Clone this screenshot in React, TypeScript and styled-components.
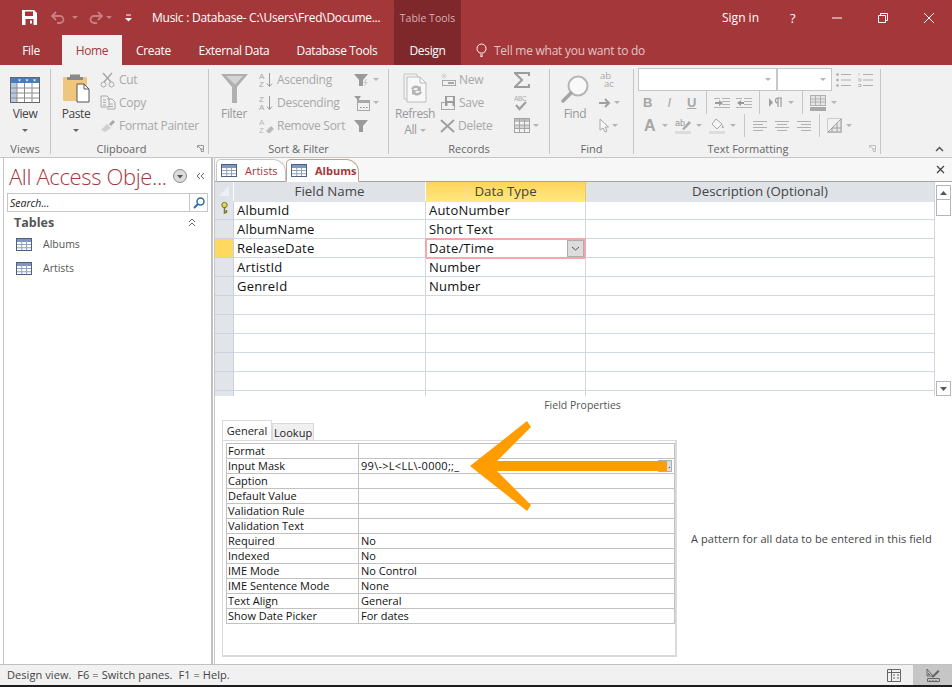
import React from "react";
import styled, { createGlobalStyle } from "styled-components";

const RED = "#a4373a";
const DIM = "#a8a8a8";
const FONT = `"Open Sans", "Noto Sans", "Liberation Sans", sans-serif`;

const GlobalStyle = createGlobalStyle`
  html, body { margin: 0; padding: 0; background: #fff; }
  body { font-family: ${FONT}; }
  * { box-sizing: border-box; }
`;

const Window = styled.div`
  width: 952px;
  height: 687px;
  overflow: hidden;
  display: flex;
  flex-direction: column;
  position: relative;
  background: #fff;
`;

/* title bar */
const TitleBar = styled.div`
  height: 35px;
  flex: none;
  display: flex;
  align-items: center;
  background: ${RED};
  color: #fff;
`;
const QuickSlot = styled.div<{ $ml: number }>`
  margin-left: ${(p) => p.$ml}px;
  display: flex;
  align-items: center;
`;
const DocTitle = styled.div`
  width: 242px;
  margin-left: 20px;
  font-size: 12px;
  white-space: nowrap;
  letter-spacing: -0.26px;
`;
const ContextLabel = styled.div`
  width: 67px;
  height: 100%;
  background: #7f282b;
  color: #d6aeb0;
  font-size: 10.5px;
  display: flex;
  align-items: center;
  justify-content: center;
`;
const SignIn = styled.div`
  margin-left: 261px;
  width: 36px;
  font-size: 12px;
  white-space: nowrap;
`;
const Help = styled.div`
  margin-left: 32px;
  width: 10px;
  font-size: 13px;
`;
const WindowButton = styled.div<{ $ml: number }>`
  margin-left: ${(p) => p.$ml}px;
  display: flex;
`;

/* ribbon tabs */
const TabStrip = styled.div`
  height: 30px;
  flex: none;
  display: flex;
  background: ${RED};
`;
const RibbonTab = styled.div<{ $w: number; $active?: boolean; $context?: boolean }>`
  width: ${(p) => p.$w}px;
  display: flex;
  align-items: center;
  justify-content: center;
  font-size: 12px;
  letter-spacing: -0.35px;
  color: ${(p) => (p.$active ? RED : "#fff")};
  background: ${(p) => (p.$active ? "#f1f1f1" : p.$context ? "#7f282b" : "transparent")};
  margin-left: ${(p) => (p.$context ? 3 : 0)}px;
`;
const TellMe = styled.div`
  margin-left: 15px;
  display: flex;
  align-items: center;
  gap: 7px;
  font-size: 12px;
  letter-spacing: -0.25px;
  color: #e3c3c4;
`;

/* ribbon */
const Ribbon = styled.div`
  height: 93px;
  flex: none;
  display: flex;
  background: #f1f1f1;
  border-bottom: 1px solid #c6c6c6;
  position: relative;
`;
const Group = styled.div<{ $w: number }>`
  width: ${(p) => p.$w}px;
  flex: none;
  display: flex;
  flex-direction: column;
  position: relative;
`;
const GroupBody = styled.div<{ $pl?: number }>`
  height: 75px;
  padding: 3px 0 0 ${(p) => p.$pl ?? 0}px;
  display: flex;
`;
const GroupLabel = styled.div<{ $pr?: number }>`
  height: 17px;
  padding-right: ${(p) => p.$pr ?? 0}px;
  font-size: 11px;
  line-height: 17px;
  text-align: center;
  color: #666;
`;
const GroupSep = styled.div`
  width: 1px;
  flex: none;
  background: #c6c6c6;
  margin: 4px 0 3px;
`;
const Launcher = styled.div`
  position: absolute;
  right: 4px;
  bottom: 5px;
  display: flex;
`;
const Large = styled.div<{ $w: number; $ml?: number; $dark?: boolean }>`
  width: ${(p) => p.$w}px;
  margin-left: ${(p) => p.$ml ?? 0}px;
  padding-top: 5px;
  display: flex;
  flex-direction: column;
  align-items: center;
  flex: none;
  font-size: 12px;
  letter-spacing: -0.4px;
  line-height: 16px;
  color: ${(p) => (p.$dark ? "#444" : "#999")};
`;
const LargeIcon = styled.div`
  height: 30px;
  margin-bottom: 3px;
  display: flex;
  align-items: flex-end;
`;
const Caret = styled.div`
  height: 14px;
  line-height: 14px;
  display: flex;
  align-items: center;
  justify-content: center;
  gap: 3px;
  margin-top: 1px;
`;
const SmallColumn = styled.div<{ $ml: number; $w?: number }>`
  margin-left: ${(p) => p.$ml}px;
  ${(p) => (p.$w ? `width: ${p.$w}px;` : "")}
  display: flex;
  flex-direction: column;
  flex: none;
`;
const Small = styled.div`
  height: 23px;
  display: flex;
  align-items: center;
  gap: 3px;
  font-size: 12px;
  letter-spacing: -0.28px;
  color: ${DIM};
  white-space: nowrap;
`;
const FormatColumn = styled.div`
  display: flex;
  flex-direction: column;
`;
const ToolRow = styled.div<{ $h: number }>`
  height: ${(p) => p.$h}px;
  display: flex;
  align-items: center;
`;
const Slot = styled.div<{ $ml: number }>`
  margin-left: ${(p) => p.$ml}px;
  display: flex;
  align-items: center;
  justify-content: center;
  flex: none;
`;
const ToolDivider = styled.div<{ $ml: number }>`
  margin-left: ${(p) => p.$ml}px;
  width: 1px;
  height: 100%;
  background: #c6c6c6;
  flex: none;
`;
const Combo = styled.div<{ $w: number }>`
  width: ${(p) => p.$w}px;
  height: 23px;
  background: #fff;
  border: 1px solid #c6c6c6;
  display: flex;
  align-items: center;
  justify-content: flex-end;
  padding-right: 5px;
  flex: none;
`;
const CollapseRibbon = styled.div`
  position: absolute;
  right: 8px;
  bottom: 5px;
  display: flex;
`;

/* body */
const Main = styled.div`
  flex: 1;
  min-height: 0;
  display: flex;
`;
const NavPane = styled.div`
  width: 210px;
  flex: none;
  margin-left: 3px;
  padding: 0 0 0 3px;
  border-left: 1px solid #c6c6c6;
  border-right: 2px solid #c0c0c0;
  margin-right: 0;
  display: flex;
  flex-direction: column;
`;
const NavHeader = styled.div`
  height: 35px;
  display: flex;
  align-items: center;
`;
const NavTitle = styled.div`
  width: 166px;
  padding-left: 2px;
  color: ${RED};
  font-size: 22px;
  font-weight: 300;
  letter-spacing: -0.35px;
  white-space: nowrap;
`;
const NavTools = styled.div`
  display: flex;
  align-items: center;
  gap: 9px;
`;
const SearchBox = styled.div`
  width: 201px;
  height: 19px;
  border: 1px solid #c6c6c6;
  display: flex;
  align-items: center;
  justify-content: space-between;
  font-size: 10.5px;
  font-style: italic;
  color: #222;
  padding-left: 2px;
`;
const SearchButton = styled.div`
  width: 18px;
  height: 17px;
  border-left: 1px solid #c6c6c6;
  display: flex;
  align-items: center;
  justify-content: center;
`;
const NavSection = styled.div`
  height: 20px;
  display: flex;
  align-items: center;
  justify-content: space-between;
  padding: 0 15px 0 7px;
  font-size: 12.5px;
  font-weight: 700;
  color: #555;
`;
const NavItem = styled.div`
  height: 24px;
  display: flex;
  align-items: center;
  gap: 11px;
  padding-left: 9px;
  font-size: 10.5px;
  color: #555;
`;
const Workspace = styled.div`
  flex: 1;
  min-width: 0;
  margin-left: 1px;
  display: flex;
  flex-direction: column;
  border-left: 1px solid #c6c6c6;
`;
const DocTabs = styled.div`
  height: 24px;
  flex: none;
  display: flex;
  align-items: flex-end;
  padding-left: 1px;
  background: #f7f7f7;
  border-bottom: 1px solid #a5a5a5;
  position: relative;
  padding-top: 1px;
`;
const DocTab = styled.div<{ $active?: boolean; $w: number }>`
  width: ${(p) => p.$w}px;
  height: 23px;
  margin-bottom: -1px;
  padding-left: 4px;
  display: flex;
  align-items: center;
  gap: 8px;
  background: #fff;
  border: 1px solid ${(p) => (p.$active ? "#b8a58e" : "#c6c6c6")};
  border-bottom: ${(p) => (p.$active ? "1px solid #fff" : "1px solid #a5a5a5")};
  border-radius: 5px 13px 0 0;
  font-size: 11px;
  font-weight: ${(p) => (p.$active ? 700 : 400)};
  color: ${RED};
`;
const CloseDoc = styled.div`
  position: absolute;
  right: 7px;
  top: 7px;
  display: flex;
`;

/* design grid */
const GridArea = styled.div`
  height: 214px;
  flex: none;
  display: flex;
`;
const Grid = styled.div`
  flex: 1;
  min-width: 0;
  overflow: hidden;
`;
const GridRow = styled.div`
  height: 19px;
  display: grid;
  grid-template-columns: 19px 192px 160px 349px;
`;
const HeaderCell = styled.div<{ $selected?: boolean }>`
  display: flex;
  align-items: center;
  justify-content: center;
  padding-bottom: 2px;
  font-size: 13.3px;
  color: #444;
  background: ${(p) => (p.$selected ? "linear-gradient(#ffd45e, #ffe97f)" : "#dfe3e8")};
  border-right: 1px solid ${(p) => (p.$selected ? "#e8c860" : "#fff")};
`;
const Selector = styled.div<{ $current?: boolean }>`
  background: ${(p) => (p.$current ? "#ffd95f" : "#e1e4e9")};
  border-bottom: 1px solid #c8d2e2;
  border-right: 1px solid #c8d2e2;
  display: flex;
  justify-content: center;
  padding-top: 1px;
`;
const Cell = styled.div<{ $active?: boolean }>`
  border-right: 1px solid #d0d7e5;
  border-bottom: 1px solid #d0d7e5;
  padding-left: 3px;
  font-size: 13px;
  line-height: 18px;
  color: #111;
  white-space: nowrap;
  position: relative;
  letter-spacing: 0.2px;
`;
const ActiveFrame = styled.div`
  position: absolute;
  left: -1px;
  right: -1px;
  top: -1px;
  bottom: -2px;
  border: 2px solid #f4a7ad;
  display: flex;
  justify-content: flex-end;
  align-items: center;
  padding-right: 0;
`;
const ComboButton = styled.div`
  width: 17px;
  height: 17px;
  background: #dcdcdc;
  border: 1px solid #adadad;
  display: flex;
  align-items: center;
  justify-content: center;
`;
const ScrollBar = styled.div`
  width: 18px;
  flex: none;
  display: flex;
  flex-direction: column;
  justify-content: space-between;
  background: #fff;
  border-left: 1px solid #d0d7e5;
  padding: 3px 0 0 1px;
`;
const ScrollTop = styled.div`
  display: flex;
  flex-direction: column;
`;
const ScrollButton = styled.div`
  width: 15px;
  height: 15px;
  border: 1px solid #b5b5b5;
  background: #fff;
  display: flex;
  align-items: center;
  justify-content: center;
`;
const ScrollThumb = styled.div`
  width: 15px;
  height: 17px;
  border: 1px solid #b5b5b5;
  margin-top: -1px;
  background: #fff;
`;

/* field properties */
const PropsArea = styled.div`
  flex: 1;
  min-height: 0;
  display: flex;
  flex-direction: column;
  position: relative;
`;
const PropsCaption = styled.div`
  height: 19px;
  flex: none;
  text-align: center;
  font-size: 10.5px;
  line-height: 19px;
  color: #555;
  padding-right: 2px;
`;
const PropsBody = styled.div`
  flex: 1;
  display: flex;
  padding: 5px 0 0 7px;
`;
const PropsLeft = styled.div`
  width: 455px;
  flex: none;
  display: flex;
  flex-direction: column;
`;
const PropTabs = styled.div`
  height: 20px;
  display: flex;
  align-items: flex-end;
  flex: none;
`;
const PropTab = styled.div<{ $active?: boolean; $w: number }>`
  width: ${(p) => p.$w}px;
  height: ${(p) => (p.$active ? 20 : 17)}px;
  display: flex;
  align-items: center;
  justify-content: center;
  font-size: 11px;
  color: #222;
  background: ${(p) => (p.$active ? "#fff" : "#f0f0f0")};
  border: 1px solid #dadada;
  border-bottom: 0;
`;
const PropsPanel = styled.div`
  height: 217px;
  border: 1px solid #dadada;
  border-right-width: 2px;
  border-bottom-width: 2px;
  padding: 2px 0 0 3px;
`;
const PropsTable = styled.div`
  width: 449px;
  border: 1px solid #c2c2c2;
  border-bottom: 0;
`;
const PropRow = styled.div`
  height: 15px;
  display: grid;
  grid-template-columns: 132px 1fr;
  border-bottom: 1px solid #c2c2c2;
`;
const PropName = styled.div`
  padding-left: 1px;
  border-right: 1px solid #c2c2c2;
  font-size: 11px;
  line-height: 14px;
  color: #111;
  white-space: nowrap;
`;
const PropValue = styled.div<{ $mask?: boolean }>`
  padding-left: 2px;
  font-size: 11px;
  letter-spacing: ${(p) => (p.$mask ? 0.28 : 0)}px;
  line-height: 14px;
  color: #111;
  white-space: nowrap;
  position: relative;
`;
const BuildButton = styled.div`
  position: absolute;
  right: 2px;
  top: 1px;
  width: 14px;
  height: 12px;
  background: #dcdcdc;
  border: 1px solid #b0b0b0;
  font-size: 9px;
  line-height: 8px;
  text-align: right;
  color: #111;
`;
const HelpText = styled.div`
  margin-left: 14px;
  padding-top: 112px;
  font-size: 11px;
  letter-spacing: 0.07px;
  line-height: 14px;
  color: #444;
  white-space: nowrap;
`;
const ArrowMark = styled.svg`
  position: absolute;
  left: 255px;
  top: 25px;
`;

/* status */
const StatusBar = styled.div`
  height: 21px;
  flex: none;
  display: flex;
  align-items: center;
  justify-content: space-between;
  padding-left: 7px;
  background: #f1f1f1;
  border-top: 1px solid #c0c0c0;
  font-size: 11px;
  line-height: 17px;
  letter-spacing: 0.07px;
  color: #444;
  white-space: pre;
`;
const StatusText = styled.div`
  margin-top: -2px;
`;
const ViewButtons = styled.div`
  height: 100%;
  display: flex;
  align-items: center;
`;
const ViewButton = styled.div<{ $active?: boolean; $w: number }>`
  width: ${(p) => p.$w}px;
  height: 100%;
  display: flex;
  align-items: center;
  justify-content: center;
  background: ${(p) => (p.$active ? "#c6c6c6" : "transparent")};
`;
const BottomEdge = styled.div`
  height: 2px;
  flex: none;
  background: #1d1d1d;
`;

/* drawings */
const Svg = styled.svg`
  display: block;
  flex: none;
`;

const Icon: React.FC<{ w: number; h: number; children: React.ReactNode }> = ({ w, h, children }) => (
  <Svg width={w} height={h} viewBox={`0 0 ${w} ${h}`} fill="none">
    {children}
  </Svg>
);

const DownCaret = ({ c = "#b5b5b5" }: { c?: string }) => (
  <Icon w={6} h={3}>
    <path d="M0 0h6L3 3z" fill={c} />
  </Icon>
);

const TableIcon = ({ w = 16, h = 13 }: { w?: number; h?: number }) => (
  <Icon w={w} h={h}>
    <rect x=".5" y=".5" width={w - 1} height={h - 1} fill="#fff" stroke="#4d6082" />
    <rect x="1" y="1" width={w - 2} height="3" fill="#7f97bd" />
    <path
      d={`M1 ${h * 0.5}H${w - 1}M1 ${h * 0.75}H${w - 1}M${w * 0.36} 4V${h - 1}M${w * 0.66} 4V${h - 1}`}
      stroke="#8ea0bd"
    />
  </Icon>
);

const ViewIcon = () => (
  <Icon w={30} h={26}>
    <rect x=".5" y=".5" width="29" height="25" fill="#fff" stroke="#666" />
    <rect x="1" y="1" width="28" height="5" fill="#4a7ebb" />
    <rect x="1" y="6" width="6" height="19" fill="#b4c9e0" />
    <path d="M1 11h28M1 16h28M1 21h28M7 6v19M14.5 6v19M22 6v19" stroke="#8c8c8c" />
    <path d="M8 2.5h3l-1.500 2zM15.500 2.500h3l-1.500 2zM23 2.500h3l-1.500 2z" fill="#fff" />
  </Icon>
);

const PasteIcon = () => (
  <Icon w={30} h={30}>
    <rect x="2" y="4" width="24" height="24" rx="1" fill="#eec77c" />
    <path d="M9 4V1.500h10V4h3v3H6V4z" fill="#8a8a8a" />
    <path d="M16 11h7l5 5v13H16z" fill="#fff" stroke="#555" />
    <path d="M23 11v5h5" stroke="#555" />
  </Icon>
);

const CutIcon = () => (
  <Icon w={16} h={16}>
    <path d="M3 1l8 9M12 1L4 10" stroke={DIM} strokeWidth="1.500" />
    <circle cx="3.500" cy="12.500" r="2.500" stroke={DIM} />
    <circle cx="11.500" cy="12.500" r="2.500" stroke={DIM} />
  </Icon>
);
const CopyIcon = () => (
  <Icon w={16} h={15}>
    <path d="M1 1h6l2 2v9H1zM7 4h5l3 3v7H7" fill="#f1f1f1" stroke={DIM} />
    <path d="M3 5h3M3 7.500h3M3 10h3M9 9h4M9 11.500h4" stroke={DIM} />
  </Icon>
);
const PainterIcon = () => (
  <Icon w={16} h={15}>
    <path d="M1 12l6-6 4 4-6 4z" fill="#d0d0d0" />
    <path d="M9 6l4-4 2 2-4 4z" fill={DIM} />
  </Icon>
);

const FilterIcon = () => (
  <Icon w={27} h={29}>
    <path d="M0 0h27L16 13v16h-5V13z" fill="#b0b0b0" />
    <path d="M5 2h17l-8 8.500z" fill="#d4d4d4" />
  </Icon>
);

const SortIcon = ({ top, bottom }: { top: string; bottom: string }) => (
  <Icon w={15} h={16}>
    <text x="0" y="7" fontSize="8" fontFamily="Liberation Sans" fill={DIM}>{top}</text>
    <text x="0" y="15" fontSize="8" fontFamily="Liberation Sans" fill={DIM}>{bottom}</text>
    <path d="M10.500 1v13M8 11.500l2.500 3 2.500-3" stroke="#999" />
  </Icon>
);
const RemoveSortIcon = () => (
  <Icon w={15} h={16}>
    <text x="0" y="7" fontSize="8" fontFamily="Liberation Sans" fill="#bbb">A</text>
    <text x="0" y="15" fontSize="8" fontFamily="Liberation Sans" fill="#bbb">Z</text>
    <path d="M7 13l5-5 3 3-4 4H9z" fill="#bbb" />
  </Icon>
);
const SmallFunnel = ({ bolt, table }: { bolt?: boolean; table?: boolean }) => (
  <Icon w={16} h={16}>
    <path d={table ? "M0 1h7L5 4v3H3V4z" : "M0 2h14L9 8v6H5V8z"} fill="#9a9a9a" />
    {bolt && <path d="M12 7l-3 4h2l-1 4 4-5h-2l1-3z" fill="#d0d0d0" />}
    {table && (
      <>
        <rect x="3.500" y="5.500" width="12" height="10" fill="#f1f1f1" stroke={DIM} />
        <path d="M4 6h11v2H4z" fill={DIM} />
        <path d="M6 12.500h1.500M9 12.500h1.500M12 12.500h1.500" stroke="#888" />
      </>
    )}
  </Icon>
);

const RefreshIcon = () => (
  <Icon w={24} h={30}>
    <path d="M1 1h13v3" stroke="#c4c4c4" />
    <path d="M1 1v25h3" stroke="#c4c4c4" />
    <path d="M4 4h13l6 6v19H4z" fill="#f8f8f8" stroke="#bdbdbd" />
    <path d="M17 4v6h6" stroke="#bdbdbd" />
    <path d="M8 16a5.500 5.500 0 0 1 9-2l1-1v5h-5l2-2a3 3 0 0 0-5 1zM19 19a5.500 5.500 0 0 1-9 2l-1 1v-5h5l-2 2a3 3 0 0 0 5-1z" fill="#b5b5b5" />
  </Icon>
);
const NewIcon = () => (
  <Icon w={16} h={14}>
    <path d="M4 0v6M1 3h6M2 1l4 4M6 1L2 5" stroke="#d5d5d5" />
    <rect x="2.500" y="7.500" width="13" height="5" fill="#f1f1f1" stroke={DIM} />
    <rect x="8" y="9" width="6" height="2" fill={DIM} />
  </Icon>
);
const SaveIcon = () => (
  <Icon w={16} h={16}>
    <rect x="1.500" y="7.500" width="13" height="7" stroke={DIM} />
    <path d="M5 1h10v10H5z" fill="#9c9c9c" />
    <rect x="7" y="2" width="6" height="4" fill="#f1f1f1" />
    <rect x="7.500" y="8" width="5" height="3" fill="#f1f1f1" />
  </Icon>
);
const DeleteIcon = () => (
  <Icon w={15} h={14}>
    <path d="M1 1l13 12M14 1L1 13" stroke="#a0a0a0" strokeWidth="2" />
  </Icon>
);
const SigmaIcon = () => (
  <Icon w={16} h={16}>
    <path d="M15 4V1H1l7 7-7 7h14v-3" stroke="#9c9c9c" strokeWidth="2" />
  </Icon>
);
const SpellIcon = () => (
  <Icon w={14} h={17}>
    <text x="0" y="6.500" fontSize="6.500" fontFamily="Liberation Sans" fill={DIM}>ABC</text>
    <path d="M2 11l3.500 4L12 8" stroke="#a0a0a0" strokeWidth="2.200" />
  </Icon>
);
const GridToolIcon = () => (
  <Icon w={16} h={15}>
    <rect x=".5" y=".5" width="15" height="14" fill="#f4f4f4" stroke="#a4a4a4" />
    <rect x="1" y="1" width="14" height="3" fill="#bdbdbd" />
    <rect x="1" y="7" width="14" height="3" fill="#d4d4d4" />
    <path d="M1 7h14M1 10.500h14M5.500 1v13M10.500 1v13" stroke="#a4a4a4" />
  </Icon>
);
const FindIcon = () => (
  <Icon w={28} h={28}>
    <circle cx="17" cy="11" r="9.500" fill="#f9f9f9" stroke="#b5b5b5" strokeWidth="2" />
    <path d="M10 18L2 26" stroke="#a4a4a4" strokeWidth="3.500" strokeLinecap="round" />
  </Icon>
);
const ReplaceMark = styled.div`
  width: 17px;
  height: 16px;
  font-size: 9.5px;
  line-height: 8px;
  color: ${DIM};
  letter-spacing: 0;
`;
const ReplaceLine = styled.div<{ $indent?: boolean }>`
  height: 8px;
  padding-left: ${(p) => (p.$indent ? 5 : 1)}px;
`;
const ReplaceIcon = () => (
  <ReplaceMark>
    <ReplaceLine>ab</ReplaceLine>
    <ReplaceLine $indent>ac</ReplaceLine>
  </ReplaceMark>
);
const GoToIcon = () => (
  <Icon w={12} h={10}>
    <path d="M0 5h9M6 1l4 4-4 4" stroke="#a0a0a0" strokeWidth="2" />
  </Icon>
);
const CursorIcon = () => (
  <Icon w={10} h={15}>
    <path d="M1 1v11l3-2 2 4 2-1-2-4h3.500z" fill="#f8f8f8" stroke="#a8a8a8" />
  </Icon>
);
const BulletIcon = ({ numbered }: { numbered?: boolean }) => (
  <Icon w={15} h={16}>
    <path d="M5 2.500h10M5 8h10M5 13.500h10" stroke="#b0b0b0" />
    {numbered ? (
      <>
        <path d="M1 1.500v2M0 7h3v2H0M0 12.500h3v2H0" stroke="#bbb" />
      </>
    ) : (
      <>
        <circle cx="1.500" cy="2.500" r="1.300" fill="#aaa" />
        <circle cx="1.500" cy="8" r="1.300" fill="#aaa" />
        <circle cx="1.500" cy="13.500" r="1.300" fill="#aaa" />
      </>
    )}
  </Icon>
);
const FontMark = styled.span<{ $i?: boolean; $u?: boolean; $s: number }>`
  font-family: "Liberation Sans", sans-serif;
  font-size: ${(p) => p.$s}px;
  font-weight: ${(p) => (p.$i ? 400 : 700)};
  font-style: ${(p) => (p.$i ? "italic" : "normal")};
  text-decoration: ${(p) => (p.$u ? "underline" : "none")};
  color: #a6a6a6;
`;
const IndentIcon = ({ back }: { back?: boolean }) => (
  <Icon w={16} h={12}>
    <path d="M8 1.500h8M8 4.500h8M8 7.500h8M0 10.500h16M0 1.500h6" stroke="#b4b4b4" />
    <path d={back ? "M5 3v2h3v2H5v2L1 6z" : "M1 5h4V3l4 3-4 3V7H1z"} fill="#9a9a9a" />
  </Icon>
);
const ParaIcon = () => (
  <Icon w={13} h={11}>
    <path d="M0 1l4 4.500L0 10z" fill="#a0a0a0" />
    <path d="M8 1h5M9 1v9M12 1v9M9 1a2.500 2.500 0 0 0 0 5" stroke="#9c9c9c" strokeWidth="1.200" />
  </Icon>
);
const GridlineIcon = () => (
  <Icon w={16} h={16}>
    <rect x=".5" y=".5" width="15" height="10" fill="#e4e4e4" stroke="#b0b0b0" />
    <path d="M1 4h14M1 7h14M5.500 1v9M10.500 1v9" stroke="#b0b0b0" />
    <rect y="12" width="16" height="4" fill="#a8a8a8" />
  </Icon>
);
const HighlightIcon = () => (
  <Icon w={16} h={16}>
    <text x="0" y="8" fontSize="9" fontFamily="Liberation Sans" fill="#999">ab</text>
    <path d="M7 11l7-8 2 2-7 7z" fill="#a8a8a8" />
    <rect y="13" width="16" height="3" fill="#dcdcdc" />
  </Icon>
);
const FillIcon = () => (
  <Icon w={16} h={16}>
    <path d="M7 1l6 5-5 5-5-5z" fill="#f6f6f6" stroke="#a8a8a8" />
    <path d="M13 6l2 4h-2z" fill="#a8a8a8" />
    <rect y="13" width="16" height="3" fill="#dcdcdc" />
  </Icon>
);
const AlignIcon = ({ kind }: { kind: "l" | "c" | "r" }) => {
  const d =
    kind === "l"
      ? "M0 1.500h14M0 4.500h10M0 7.500h14M0 10.500h10"
      : kind === "c"
        ? "M0 1.500h14M2 4.500h10M0 7.500h14M2 10.500h10"
        : "M0 1.500h14M4 4.500h10M0 7.500h14M4 10.500h10";
  return (
    <Icon w={14} h={12}>
      <path d={d} stroke="#b0b0b0" />
    </Icon>
  );
};
const AltRowIcon = () => (
  <Icon w={15} h={15}>
    <path d="M.5.500h14v14H.5z" stroke="#aaa" strokeDasharray="1 1" />
    <path d="M14 1L1 14h13z" fill="#e8e8e8" stroke="#a0a0a0" />
    <path d="M5 14v-4M10 14V5M5 10h9" stroke="#a0a0a0" />
  </Icon>
);
const LauncherIcon = ({ c = "#9a9a9a" }: { c?: string }) => (
  <Icon w={7} h={7}>
    <path d="M.5 3V.500H6.500V6.500H4" stroke={c} />
    <path d="M1 1l4 4M3 5h2V3" stroke={c} />
  </Icon>
);

const NAV = ["Albums", "Artists"];
const FIELDS = [
  ["AlbumId", "AutoNumber"],
  ["AlbumName", "Short Text"],
  ["ReleaseDate", "Date/Time"],
  ["ArtistId", "Number"],
  ["GenreId", "Number"],
  ["", ""],
  ["", ""],
  ["", ""],
  ["", ""],
  ["", ""],
  ["", ""],
];
const PROPS = [
  ["Format", ""],
  ["Input Mask", "99\\->L<LL\\-0000;;_"],
  ["Caption", ""],
  ["Default Value", ""],
  ["Validation Rule", ""],
  ["Validation Text", ""],
  ["Required", "No"],
  ["Indexed", "No"],
  ["IME Mode", "No Control"],
  ["IME Sentence Mode", "None"],
  ["Text Align", "General"],
  ["Show Date Picker", "For dates"],
];

const App: React.FC = () => {
  return (
    <Window>
      <GlobalStyle />
      <TitleBar>
        <QuickSlot $ml={22}>
          <Icon w={15} h={15}>
            <path d="M0 0h12l3 3v12H0z" fill="#fff" />
            <rect x="3" y="1.500" width="8" height="4.500" fill={RED} />
            <rect x="3.500" y="9" width="8" height="6" fill={RED} />
            <rect x="8" y="10.500" width="2" height="3" fill="#fff" />
          </Icon>
        </QuickSlot>
        <QuickSlot $ml={14}>
          <Icon w={18} h={13}>
            <path d="M5 1L1 5l4 4M1 5h8a3.500 3.500 0 0 1 0 7H6" stroke="#c87f81" strokeWidth="1.800" />
          </Icon>
        </QuickSlot>
        <QuickSlot $ml={3}>
          <DownCaret c="#c87f81" />
        </QuickSlot>
        <QuickSlot $ml={9}>
          <Icon w={16} h={13}>
            <path d="M11 1l4 4-4 4M15 5H7a3.500 3.500 0 0 0 0 7h3" stroke="#c87f81" strokeWidth="1.800" />
          </Icon>
        </QuickSlot>
        <QuickSlot $ml={3}>
          <DownCaret c="#c87f81" />
        </QuickSlot>
        <QuickSlot $ml={13}>
          <Icon w={7} h={8}>
            <path d="M1 1h5" stroke="#fff" />
            <path d="M0 4h7L3.500 7.500z" fill="#fff" />
          </Icon>
        </QuickSlot>
        <DocTitle>Music : Database- C:\Users\Fred\Docume...</DocTitle>
        <ContextLabel>Table Tools</ContextLabel>
        <SignIn>Sign in</SignIn>
        <Help>?</Help>
        <WindowButton $ml={32}>
          <Icon w={10} h={2}>
            <path d="M0 1h10" stroke="#fff" />
          </Icon>
        </WindowButton>
        <WindowButton $ml={36}>
          <Icon w={10} h={10}>
            <path d="M.5 2.500h7v7h-7zM2.500 2.500V.500h7v7h-2" stroke="#fff" />
          </Icon>
        </WindowButton>
        <WindowButton $ml={36}>
          <Icon w={10} h={10}>
            <path d="M0 0l10 10M10 0L0 10" stroke="#fff" />
          </Icon>
        </WindowButton>
      </TitleBar>

      <TabStrip>
        <RibbonTab $w={62}>File</RibbonTab>
        <RibbonTab $w={60} $active>Home</RibbonTab>
        <RibbonTab $w={63}>Create</RibbonTab>
        <RibbonTab $w={98}>External Data</RibbonTab>
        <RibbonTab $w={108}>Database Tools</RibbonTab>
        <RibbonTab $w={67} $context>Design</RibbonTab>
        <TellMe>
          <Icon w={11} h={14}>
            <path d="M3.500 10C2 8.500 1 7.500 1 5.500a4.500 4.500 0 0 1 9 0c0 2-1 3-2.500 4.500zM4 12h3M4.500 13.500h2" stroke="#fff" />
          </Icon>
          Tell me what you want to do
        </TellMe>
      </TabStrip>

      <Ribbon>
        <Group $w={50}>
          <GroupBody>
            <Large $w={50} $dark>
              <LargeIcon>
                <ViewIcon />
              </LargeIcon>
              View
              <Caret>
                <DownCaret c="#666" />
              </Caret>
            </Large>
          </GroupBody>
          <GroupLabel>Views</GroupLabel>
        </Group>
        <GroupSep />
        <Group $w={157}>
          <GroupBody>
            <Large $w={40} $ml={5} $dark>
              <LargeIcon>
                <PasteIcon />
              </LargeIcon>
              Paste
              <Caret>
                <DownCaret c="#666" />
              </Caret>
            </Large>
            <SmallColumn $ml={4}>
              <Small><CutIcon />Cut</Small>
              <Small><CopyIcon />Copy</Small>
              <Small><PainterIcon />Format Painter</Small>
            </SmallColumn>
          </GroupBody>
          <GroupLabel $pr={16}>Clipboard</GroupLabel>
          <Launcher>
            <LauncherIcon />
          </Launcher>
        </Group>
        <GroupSep />
        <Group $w={179}>
          <GroupBody>
            <Large $w={40} $ml={5}>
              <LargeIcon>
                <FilterIcon />
              </LargeIcon>
              Filter
            </Large>
            <SmallColumn $ml={5} $w={95}>
              <Small><SortIcon top="A" bottom="Z" />Ascending</Small>
              <Small><SortIcon top="Z" bottom="A" />Descending</Small>
              <Small><RemoveSortIcon />Remove Sort</Small>
            </SmallColumn>
            <SmallColumn $ml={0}>
              <Small><SmallFunnel bolt /><DownCaret /></Small>
              <Small><SmallFunnel table /><DownCaret /></Small>
              <Small><SmallFunnel /></Small>
            </SmallColumn>
          </GroupBody>
          <GroupLabel>Sort &amp; Filter</GroupLabel>
        </Group>
        <GroupSep />
        <Group $w={160}>
          <GroupBody>
            <Large $w={46} $ml={3}>
              <LargeIcon>
                <RefreshIcon />
              </LargeIcon>
              Refresh
              <Caret>
                <span>All</span>
                <DownCaret />
              </Caret>
            </Large>
            <SmallColumn $ml={2} $w={74}>
              <Small><NewIcon />New</Small>
              <Small><SaveIcon />Save</Small>
              <Small><DeleteIcon />Delete</Small>
            </SmallColumn>
            <SmallColumn $ml={0}>
              <Small><SigmaIcon /></Small>
              <Small><SpellIcon /></Small>
              <Small><GridToolIcon /><DownCaret /></Small>
            </SmallColumn>
          </GroupBody>
          <GroupLabel>Records</GroupLabel>
        </Group>
        <GroupSep />
        <Group $w={83}>
          <GroupBody>
            <Large $w={40} $ml={5}>
              <LargeIcon>
                <FindIcon />
              </LargeIcon>
              Find
            </Large>
            <SmallColumn $ml={4}>
              <Small><ReplaceIcon /></Small>
              <Small><GoToIcon /><DownCaret /></Small>
              <Small><CursorIcon /><DownCaret /></Small>
            </SmallColumn>
          </GroupBody>
          <GroupLabel>Find</GroupLabel>
        </Group>
        <GroupSep />
        <Group $w={246}>
          <GroupBody $pl={4}>
            <FormatColumn>
              <ToolRow $h={23}>
                <Combo $w={139}><DownCaret /></Combo>
                <Combo $w={55}><DownCaret /></Combo>
                <Slot $ml={4}><BulletIcon /></Slot>
                <Slot $ml={7}><BulletIcon numbered /></Slot>
              </ToolRow>
              <ToolRow $h={23}>
                <Slot $ml={5}><FontMark $s={13}>B</FontMark></Slot>
                <Slot $ml={15}><FontMark $s={13} $i>I</FontMark></Slot>
                <Slot $ml={16}><FontMark $s={13} $u>U</FontMark></Slot>
                <ToolDivider $ml={10} />
                <Slot $ml={7}><IndentIcon /></Slot>
                <Slot $ml={6}><IndentIcon back /></Slot>
                <ToolDivider $ml={7} />
                <Slot $ml={9}><ParaIcon /></Slot>
                <Slot $ml={6}><DownCaret /></Slot>
                <ToolDivider $ml={8} />
                <Slot $ml={7}><GridlineIcon /></Slot>
                <Slot $ml={5}><DownCaret /></Slot>
              </ToolRow>
              <ToolRow $h={23}>
                <Slot $ml={6}><FontMark $s={16}>A</FontMark></Slot>
                <Slot $ml={6}><DownCaret /></Slot>
                <Slot $ml={7}><HighlightIcon /></Slot>
                <Slot $ml={5}><DownCaret /></Slot>
                <Slot $ml={7}><FillIcon /></Slot>
                <Slot $ml={5}><DownCaret /></Slot>
                <ToolDivider $ml={8} />
                <Slot $ml={8}><AlignIcon kind="l" /></Slot>
                <Slot $ml={8}><AlignIcon kind="c" /></Slot>
                <Slot $ml={8}><AlignIcon kind="r" /></Slot>
                <ToolDivider $ml={8} />
                <Slot $ml={7}><AltRowIcon /></Slot>
                <Slot $ml={4}><DownCaret /></Slot>
              </ToolRow>
            </FormatColumn>
          </GroupBody>
          <GroupLabel $pr={18}>Text Formatting</GroupLabel>
          <Launcher>
            <LauncherIcon c="#c0c0c0" />
          </Launcher>
        </Group>
        <GroupSep />
        <CollapseRibbon>
          <Icon w={9} h={6}>
            <path d="M1 5l3.500-3.500L8 5" stroke="#555" strokeWidth="1.500" />
          </Icon>
        </CollapseRibbon>
      </Ribbon>

      <Main>
        <NavPane>
          <NavHeader>
            <NavTitle>All Access Obje...</NavTitle>
            <NavTools>
              <Icon w={14} h={14}>
                <circle cx="7" cy="7" r="6.500" fill="#dcdcdc" stroke="#8c8c8c" />
                <path d="M4 6h6L7 9.500z" fill="#555" />
              </Icon>
              <Icon w={9} h={8}>
                <path d="M4 1L1 4l3 3M8 1L5 4l3 3" stroke="#666" />
              </Icon>
            </NavTools>
          </NavHeader>
          <SearchBox>
            Search...
            <SearchButton>
              <Icon w={12} h={12}>
                <circle cx="7.500" cy="4.500" r="3.500" stroke="#2f6ea8" strokeWidth="1.500" />
                <path d="M5 7l-4 4" stroke="#2f6ea8" strokeWidth="2" />
              </Icon>
            </SearchButton>
          </SearchBox>
          <NavSection>
            Tables
            <Icon w={8} h={9}>
              <path d="M1 4l3-3 3 3M1 8l3-3 3 3" stroke="#666" />
            </Icon>
          </NavSection>
          {NAV.map((name) => (
            <NavItem key={name}>
              <TableIcon />
              {name}
            </NavItem>
          ))}
        </NavPane>

        <Workspace>
          <DocTabs>
            <DocTab $w={70}>
              <TableIcon />
              Artists
            </DocTab>
            <DocTab $w={73} $active>
              <TableIcon />
              Albums
            </DocTab>
            <CloseDoc>
              <Icon w={9} h={9}>
                <path d="M1 1l7 7M8 1L1 8" stroke="#444" strokeWidth="1.300" />
              </Icon>
            </CloseDoc>
          </DocTabs>

          <GridArea>
            <Grid>
              <GridRow>
                <HeaderCell>
                  <Icon w={12} h={12}>
                    <path d="M11 1v10H1z" fill="#eef0f3" />
                  </Icon>
                </HeaderCell>
                <HeaderCell>Field Name</HeaderCell>
                <HeaderCell $selected>Data Type</HeaderCell>
                <HeaderCell>Description (Optional)</HeaderCell>
              </GridRow>
              {FIELDS.map(([name, type], i) => (
                <GridRow key={i}>
                  <Selector $current={i === 2}>
                    {i === 0 && (
                      <Icon w={7} h={12}>
                        <circle cx="3.500" cy="3" r="2.700" fill="#e6d25a" stroke="#7a7a2a" />
                        <path d="M3.500 5v6l2-1V8" stroke="#7a7a2a" strokeWidth="1.500" />
                      </Icon>
                    )}
                  </Selector>
                  <Cell>{name}</Cell>
                  <Cell>
                    {type}
                    {i === 2 && (
                      <ActiveFrame>
                        <ComboButton>
                          <Icon w={9} h={5}>
                            <path d="M1 1l3.500 3L8 1" stroke="#555" />
                          </Icon>
                        </ComboButton>
                      </ActiveFrame>
                    )}
                  </Cell>
                  <Cell />
                </GridRow>
              ))}
            </Grid>
            <ScrollBar>
              <ScrollTop>
                <ScrollButton>
                  <Icon w={7} h={4}>
                    <path d="M3.500 0L7 4H0z" fill="#555" />
                  </Icon>
                </ScrollButton>
                <ScrollThumb />
              </ScrollTop>
              <ScrollButton>
                <Icon w={7} h={4}>
                  <path d="M0 0h7L3.500 4z" fill="#555" />
                </Icon>
              </ScrollButton>
            </ScrollBar>
          </GridArea>

          <PropsArea>
            <PropsCaption>Field Properties</PropsCaption>
            <PropsBody>
              <PropsLeft>
                <PropTabs>
                  <PropTab $w={50} $active>General</PropTab>
                  <PropTab $w={42}>Lookup</PropTab>
                </PropTabs>
                <PropsPanel>
                  <PropsTable>
                    {PROPS.map(([name, value], i) => (
                      <PropRow key={name}>
                        <PropName>{name}</PropName>
                        <PropValue $mask={i === 1}>
                          {value}
                          {i === 1 && <BuildButton>.</BuildButton>}
                        </PropValue>
                      </PropRow>
                    ))}
                  </PropsTable>
                </PropsPanel>
              </PropsLeft>
              <HelpText>A pattern for all data to be entered in this field</HelpText>
            </PropsBody>
            <ArrowMark width="200" height="92" viewBox="470 421 200 92">
              <path
                d="M470 466L527 421L531 427L497 461H667V471H497L531 505L527 511Z"
                fill="#ff9c00"
              />
            </ArrowMark>
          </PropsArea>
        </Workspace>
      </Main>

      <StatusBar>
        <StatusText>Design view.  F6 = Switch panes.  F1 = Help.</StatusText>
        <ViewButtons>
          <ViewButton $w={39}>
            <Icon w={14} h={13}>
              <path d="M.5.500h13v12H.5zM.5 3.500h13M4.500.500v12" stroke="#666" />
              <path d="M6 6h2M10 6h2M6 9h2M10 9h2" stroke="#666" />
            </Icon>
          </ViewButton>
          <ViewButton $w={39} $active>
            <Icon w={14} h={14}>
              <path d="M1 1v7h6zM2.500 5v1.500H4" stroke="#666" />
              <path d="M6 8l6-6 1.500 1.500-6 6H6z" fill="#666" />
              <path d="M1.500 10.500h12v3h-12zM4 12v1.500M7 12v1.500M10 12v1.500" stroke="#666" />
            </Icon>
          </ViewButton>
        </ViewButtons>
      </StatusBar>
      <BottomEdge />
    </Window>
  );
};

export default App;
